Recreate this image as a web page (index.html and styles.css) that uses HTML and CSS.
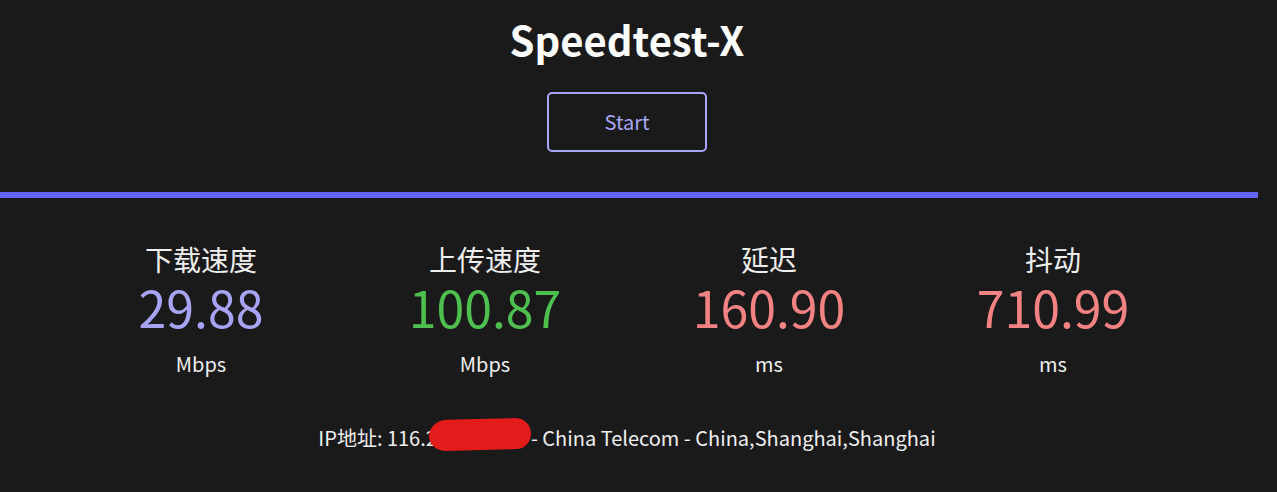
FILE: index.html
```html
<!DOCTYPE html>
<html lang="zh-CN">
<head>
<meta charset="utf-8">
<title>Speedtest-X</title>
<link rel="stylesheet" href="styles.css">
</head>
<body>
<div class="page">
  <header class="head">
    <h1 class="title">Speedtest-X</h1>
    <button class="start">Start</button>
  </header>
  <div class="bar"></div>
  <section class="stats">
    <div class="stat">
      <div class="label">下载速度</div>
      <div class="value dl">29.88</div>
      <div class="unit">Mbps</div>
    </div>
    <div class="stat">
      <div class="label">上传速度</div>
      <div class="value ul">100.87</div>
      <div class="unit">Mbps</div>
    </div>
    <div class="stat">
      <div class="label">延迟</div>
      <div class="value ping">160.90</div>
      <div class="unit">ms</div>
    </div>
    <div class="stat">
      <div class="label">抖动</div>
      <div class="value ping">710.99</div>
      <div class="unit">ms</div>
    </div>
  </section>
  <p class="ip">IP地址: 116.2<span class="hidden"><span class="blob"></span></span>- China Telecom - China,Shanghai,Shanghai</p>
</div>
</body>
</html>
```

FILE: styles.css
```css
html, body {
  margin: 0;
  padding: 0;
  background: #1a1a1a;
}
body {
  font-family: "Noto Sans CJK SC", "Noto Sans", sans-serif;
  color: #efefef;
  width: 1277px;
  height: 492px;
  overflow: hidden;
}
.page {
  width: 1258px;
}
.head {
  width: 1254px;
  display: flex;
  flex-direction: column;
  align-items: center;
  padding-top: 13px;
}
.title {
  margin: 0;
  font-size: 40px;
  line-height: 52px;
  font-weight: 700;
  color: #ffffff;
}
.start {
  margin-top: 27px;
  width: 160px;
  height: 60px;
  background: transparent;
  border: 2px solid #a9a6f5;
  border-radius: 5px;
  color: #a9a6f5;
  font-family: inherit;
  font-size: 20px;
  line-height: 26px;
  padding: 0 0 1px;
}
.bar {
  margin-top: 40px;
  width: 1258px;
  height: 6px;
  background: #6366fa;
}
.stats {
  width: 1136px;
  margin: 43px 0 0 59px;
  display: grid;
  grid-template-columns: repeat(4, 1fr);
}
.stat {
  display: flex;
  flex-direction: column;
  align-items: center;
}
.label {
  font-size: 28px;
  line-height: 36px;
}
.value {
  font-size: 50px;
  line-height: 56px;
  margin-top: 1px;
}
.dl { color: #a7a4f6; }
.ul { color: #4fc04f; }
.ping { color: #f38383; }
.unit {
  margin-top: 16px;
  font-size: 20px;
  line-height: 28px;
}
.ip {
  width: 1254px;
  margin: 46px 0 0;
  text-align: center;
  font-size: 20px;
  line-height: 28px;
}
.hidden {
  display: inline-block;
  position: relative;
  width: 94px;
  height: 1px;
}
.blob {
  position: absolute;
  left: -8px;
  top: -26px;
  width: 102px;
  height: 31px;
  background: #e31b1b;
  border-radius: 18px 16px 14px 16px / 16px 15px 16px 15px;
  transform: rotate(-1.5deg);
}
```
